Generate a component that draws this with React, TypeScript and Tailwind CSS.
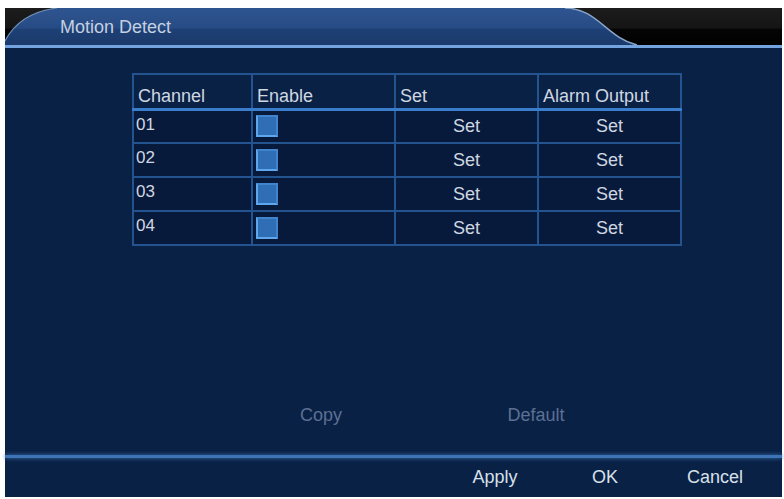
// Motion Detect settings dialog (DVR style)

const channels = ['01', '02', '03', '04'];

const font = { fontFamily: '"Liberation Sans", Arial, sans-serif' };

function TitleTab() {
  return (
    <svg className="absolute inset-0 h-full w-full" viewBox="0 0 777 37" preserveAspectRatio="none">
      <defs>
        <linearGradient id="tab" x1="0" y1="0" x2="0" y2="1">
          <stop offset="0" stopColor="#2f5590" />
          <stop offset="0.55" stopColor="#264b84" />
          <stop offset="0.56" stopColor="#1e4075" />
          <stop offset="1" stopColor="#1b3a6c" />
        </linearGradient>
        <linearGradient id="dark" x1="0" y1="0" x2="0" y2="1">
          <stop offset="0" stopColor="#1c1c1c" />
          <stop offset="0.55" stopColor="#151515" />
          <stop offset="0.56" stopColor="#050505" />
          <stop offset="1" stopColor="#000000" />
        </linearGradient>
      </defs>
      <rect x="0" y="0" width="777" height="37" fill="url(#dark)" />
      <path d="M0 37 L0 33 C10 14 28 3 52 0 L560 0 C592 0 602 30 632 37 Z" fill="url(#tab)" />
      <path d="M0 33 C10 14 28 3 52 0" fill="none" stroke="#6f8fb8" strokeWidth="1.2" />
      <path d="M560 0 C592 0 602 30 632 37" fill="none" stroke="#8aa6c8" strokeWidth="1.4" />
    </svg>
  );
}

function Checkbox() {
  return <div className="h-[22px] w-[22px] border-2 border-t-[#3f84cc] border-l-[#5ea6ee] border-b-[#5ea6ee] border-r-[#3f84cc] bg-[#2f6db4]" />;
}

export default function App() {
  return (
    <div className="h-[499px] w-[784px] bg-white pt-2 pl-[5px] pr-[2px] pb-[2px]" style={font}>
      <div className="flex h-full flex-col bg-[#0a2146]">
        <div className="relative h-[37px]">
          <TitleTab />
          <div className="relative pl-[55px] pt-[6px] text-[18px] text-[#c4d0e0]">Motion Detect</div>
        </div>
        <div className="h-[3px] bg-[#74a4e0]" />

        <div className="flex flex-1 flex-col pt-[25px] pb-[25px]">
          <table className="ml-[127px] w-[548px] table-fixed border-collapse text-[#cfd7e1]">
            <colgroup>
              <col className="w-[119px]" />
              <col className="w-[143px]" />
              <col className="w-[143px]" />
              <col className="w-[143px]" />
            </colgroup>
            <thead>
              <tr className="h-[35px]">
                {['Channel', 'Enable', 'Set', 'Alarm Output'].map((h) => (
                  <th
                    key={h}
                    className="border-2 border-b-[3px] border-[#23548f] border-b-[#3a7dcb] pb-[3px] pl-1 text-left align-bottom text-[18px] font-normal leading-none"
                  >
                    {h}
                  </th>
                ))}
              </tr>
            </thead>
            <tbody>
              {channels.map((ch) => (
                <tr key={ch} className="h-[34px]">
                  <td className="border-2 border-[#23548f] bg-[#081a3b] pl-[2px] pt-[5px] align-top text-[17px] leading-none">{ch}</td>
                  <td className="border-2 border-[#23548f] bg-[#081a3b] pl-[3px] align-middle">
                    <Checkbox />
                  </td>
                  <td className="border-2 border-[#23548f] bg-[#081a3b] text-center text-[18px]">Set</td>
                  <td className="border-2 border-[#23548f] bg-[#081a3b] text-center text-[18px]">Set</td>
                </tr>
              ))}
            </tbody>
          </table>

          <div className="flex-1" />

          <div className="flex h-[30px] items-center pl-[261px] text-[18px] text-[#5c7093]">
            <div className="w-[110px] text-center">Copy</div>
            <div className="ml-[105px] w-[110px] text-center">Default</div>
          </div>
        </div>

        <div className="h-[3px] bg-[#3d74b8] shadow-[0_0_4px_#3d74b8]" />
        <div className="flex h-[39px] items-center justify-end pr-[12px] text-[18px] text-[#d8e0ea]">
          <div className="w-[110px] text-center">Apply</div>
          <div className="w-[110px] text-center">OK</div>
          <div className="w-[110px] text-center">Cancel</div>
        </div>
      </div>
    </div>
  );
}
